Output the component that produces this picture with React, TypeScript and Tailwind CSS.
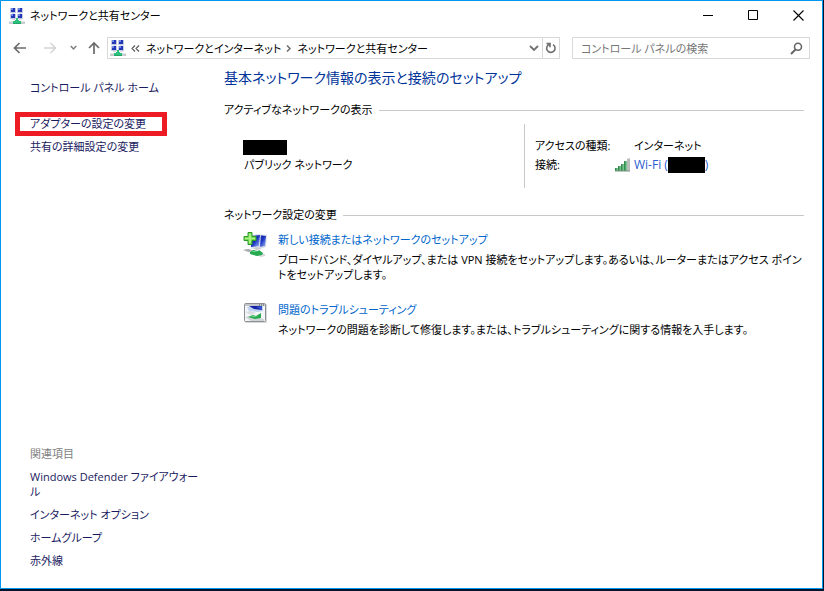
import type { ReactNode } from 'react';

const RELATED_LINKS = ['Windows Defender ファイアウォール', 'インターネット オプション', 'ホームグループ', '赤外線'];

function NetworkIcon({ className = '' }: { className?: string }) {
    return (
        <svg className={className} width="16" height="16" viewBox="0 0 16 16" shapeRendering="crispEdges" aria-hidden="true">
            {[[2, 0], [9, 0], [2, 6], [9, 6]].map(([x, y]) => (
                <g key={`${x}-${y}`}>
                    <rect x={x - 1} y={y} width="6" height="5" fill="#c3cbe0" />
                    <rect x={x} y={y} width="4" height="4" fill="#2437b8" />
                    <rect x={x} y={y} width="2" height="2" fill="#6f86e0" />
                    <rect x={x + 1} y={y + 5} width="3" height="1" fill="#dde0e6" />
                </g>
            ))}
            <rect y="13" width="16" height="3" fill="#c9cdd0" />
            <rect y="13" width="16" height="1" fill="#e3e6e8" />
            <path d="M7 10h2v2h1v1h2v3H4v-3h2v-1h1z" fill="#2fbf7c" />
            <rect x="4" y="15" width="8" height="1" fill="#24a568" />
        </svg>
    );
}

function SignalIcon() {
    return (
        <svg width="16" height="14" viewBox="0 0 16 14" aria-hidden="true">
            <defs>
                <linearGradient id="signal" x1="0" y1="0" x2="1" y2="0">
                    <stop offset="0" stopColor="#1f8040" />
                    <stop offset="1" stopColor="#8fcf9f" />
                </linearGradient>
            </defs>
            <path d="M0 10h3v3H0z" fill="url(#signal)" />
            <path d="M3 8h3v5H3z" fill="url(#signal)" />
            <path d="M6 6h3v7H6z" fill="url(#signal)" />
            <path d="M9 3h3v10H9z" fill="url(#signal)" />
            <path d="M12 1l3-1v13h-3z" fill="#b9bdb9" />
            <path d="M0 13h15" stroke="#78917f" strokeWidth="1" />
        </svg>
    );
}

function NewConnectionIcon() {
    return (
        <svg width="26" height="26" viewBox="0 0 26 26" aria-hidden="true">
            <defs>
                <linearGradient id="screen" x1="0" y1="0" x2="1" y2="1">
                    <stop offset="0" stopColor="#0b1682" />
                    <stop offset="0.5" stopColor="#1d36c6" />
                    <stop offset="1" stopColor="#a8c4f8" />
                </linearGradient>
            </defs>
            <path d="M13 2l11 1-1 12-7 2z" fill="#d7dce6" />
            <path d="M15 3l8 1-1 10-6 1z" fill="url(#screen)" />
            <path d="M7 3l11-1-1 13-9 2z" fill="#dfe4ee" />
            <path d="M8 4l9-1-1 11-8 1z" fill="url(#screen)" />
            <path d="M10 16l5-1 4 2-6 1z" fill="#c6cbd2" />
            <path d="M0 18l5-1 17 5v2l-4 1z" fill="#d6d8da" />
            <path d="M0 18l5-1 4 1-3 2z" fill="#a9acaf" />
            <path d="M7 20l3-2 5 1 1-1 4 3-1 2-5 1-7-2z" fill="#27ab52" />
            <path d="M8 20l3-1 4 1z" fill="#6fda8e" />
            <path d="M5 .5h4v4h4v4H9v4H5v-4H1v-4h4z" fill="#7ede5a" stroke="#2b9a24" />
            <path d="M6 2h2v4h4v1H8v4H6V7H2V6h4z" fill="#a9f285" />
        </svg>
    );
}

function TroubleshootIcon() {
    return (
        <svg width="26" height="22" viewBox="0 0 26 22" aria-hidden="true">
            <path d="M2 2h22v19H2z" fill="#d9d9d9" />
            <rect x="1.5" y="1.5" width="21" height="18" rx="1" fill="#f5f6f7" stroke="#8b8f93" />
            <path d="M2 2h20v2H2z" fill="#c2c6ca" />
            <path d="M16 3h1M18 3h1M20 3h1" stroke="#4d5358" />
            <path d="M4 5l16-1v5l-5 1-9-1z" fill="#bfd0f2" />
            <path d="M6 4h13v4l-8-1z" fill="#1523a4" />
            <path d="M13 5l6-1v4z" fill="#3654d2" />
            <path d="M2 10l5-1 6 2-5 2z" fill="#dadde0" />
            <path d="M2 15l6-1 13 3v2H8z" fill="#d0d4d7" />
            <path d="M5 15l5-2 3 1 5-3v5l-6 1z" fill="#27a94f" />
            <path d="M7 15l4-1 4 1z" fill="#77db93" />
        </svg>
    );
}

function SectionTitle({ children }: { children: ReactNode }) {
    return (
        <div className="flex items-center gap-1.5">
            <h2 className="leading-5">{children}</h2>
            <div className="h-px flex-1 bg-[#c8c8c8]" />
        </div>
    );
}

interface TaskProps {
    icon: ReactNode;
    title: string;
    children: ReactNode;
}

function Task({ icon, title, children }: TaskProps) {
    return (
        <li className="flex gap-[9px] pl-[19px]">
            <div className="shrink-0">{icon}</div>
            <div className="min-w-0 flex-1">
                <a href="#" className="block text-[#0066cc]">{title}</a>
                <p className="mt-[5px]">{children}</p>
            </div>
        </li>
    );
}

export default function App() {
    return (
        <div className="min-h-screen flex flex-col bg-[#03142f] pr-px pb-0.5 font-['Open_Sans','Noto_Sans_CJK_JP',sans-serif] text-[11px] leading-[15px] text-black [font-feature-settings:'palt']">
            <div className="flex flex-1 flex-col border border-[#0097f0] bg-white">
                {/* Title bar */}
                <header className="flex h-[29px] items-center pr-px pl-2">
                    <NetworkIcon />
                    <h1 className="ml-[5px] flex-1">ネットワークと共有センター</h1>
                    <button type="button" aria-label="最小化" className="flex h-full w-[45px] items-center justify-center">
                        <svg width="11" height="11" viewBox="0 0 11 11"><path d="M0 5.5h10" stroke="#000" /></svg>
                    </button>
                    <button type="button" aria-label="最大化" className="flex h-full w-[45px] items-center justify-center">
                        <svg width="11" height="11" viewBox="0 0 11 11"><path d="M.5.5h9v9h-9z" fill="none" stroke="#000" /></svg>
                    </button>
                    <button type="button" aria-label="閉じる" className="flex h-full w-[45px] items-center justify-center">
                        <svg width="11" height="11" viewBox="0 0 11 11"><path d="M.5.5l10 10M10.5.5l-10 10" stroke="#000" strokeWidth="1.1" /></svg>
                    </button>
                </header>

                {/* Navigation bar */}
                <nav className="mt-[7px] flex h-[22px] items-center pr-3">
                    <div className="flex w-[106px] shrink-0 items-center pl-3">
                        <button type="button" aria-label="戻る">
                            <svg width="14" height="12" viewBox="0 0 14 12" fill="none" stroke="#6b6b6b" strokeWidth="1.7"><path d="M13 6H2M6.5 1L1.5 6l5 5" /></svg>
                        </button>
                        <button type="button" aria-label="進む" className="ml-4">
                            <svg width="14" height="12" viewBox="0 0 14 12" fill="none" stroke="#d4d4d4" strokeWidth="1.5"><path d="M1 6h11M7.5 1l5 5-5 5" /></svg>
                        </button>
                        <button type="button" aria-label="最近表示した場所" className="ml-[13px]">
                            <svg width="7" height="6" viewBox="0 0 7 6" fill="none" stroke="#7d7d7d" strokeWidth="1.5"><path d="M.8 1l2.7 3 2.7-3" /></svg>
                        </button>
                        <button type="button" aria-label="上へ" className="ml-[11px]">
                            <svg width="12" height="14" viewBox="0 0 12 14" fill="none" stroke="#6b6b6b" strokeWidth="1.7"><path d="M6 13V2M1 7l5-5 5 5" /></svg>
                        </button>
                    </div>
                    <div className="flex h-full flex-1 items-center border border-[#d9d9d9] pl-0.5">
                        <NetworkIcon className="shrink-0" />
                        <svg className="ml-[5px] shrink-0" width="9" height="7" viewBox="0 0 9 7" fill="none" stroke="#555" strokeWidth="1.1"><path d="M4 .5l-3 3 3 3M8 .5l-3 3 3 3" /></svg>
                        <button type="button" className="ml-[6px]">ネットワークとインターネット</button>
                        <svg className="ml-[5px] shrink-0" width="5" height="7" viewBox="0 0 5 7" fill="none" stroke="#666" strokeWidth="1.4"><path d="M1 .5l3 3-3 3" /></svg>
                        <button type="button" className="ml-[6px] flex-1 text-left">ネットワークと共有センター</button>
                        <button type="button" aria-label="以前の場所" className="flex h-full w-4 items-center justify-center">
                            <svg width="10" height="7" viewBox="0 0 10 7" fill="none" stroke="#707070" strokeWidth="1.8"><path d="M1 1l4 4 4-4" /></svg>
                        </button>
                        <button type="button" aria-label="最新の情報に更新" className="flex h-full w-[17px] items-center justify-center border-l border-[#d9d9d9]">
                            <svg width="12" height="12" viewBox="0 0 12 12" fill="none" stroke="#6f6f6f" strokeWidth="1.6"><path d="M1.5 1.5H5v3.7M4.6 2.2A4.2 4.2 0 1 0 8 2.6" /></svg>
                        </button>
                    </div>
                    <label className="ml-3 flex h-full w-[238px] items-center border border-[#d9d9d9] pr-1.5 pl-2">
                        <input type="text" aria-label="コントロール パネルの検索" placeholder="コントロール パネルの検索" className="min-w-0 flex-1 outline-none placeholder:text-[#767676]" />
                        <svg width="13" height="13" viewBox="0 0 13 13" fill="none" stroke="#666" strokeWidth="1.6"><circle cx="8" cy="4.8" r="3.5" /><path d="M5.5 7.5L1 12" strokeWidth="2" /></svg>
                    </label>
                </nav>

                <div className="mt-px flex flex-1">
                    {/* Left pane */}
                    <aside className="flex w-[223px] shrink-0 flex-col items-start pt-5 pr-4 pb-5 pl-[29px] text-[#1a1a5e]">
                        <a href="#">コントロール パネル ホーム</a>
                        <a href="#" className="-ml-[15px] mt-[17px] w-[152px] border-[5px] border-[#ed1c24] pl-2.5 leading-[14px]">アダプターの設定の変更</a>
                        <a href="#" className="mt-[3px]">共有の詳細設定の変更</a>
                        <h2 className="mt-auto text-[#808080]">関連項目</h2>
                        <ul className="mt-2 flex w-[172px] flex-col gap-2">
                            {RELATED_LINKS.map(label => (
                                <li key={label}><a href="#">{label}</a></li>
                            ))}
                        </ul>
                    </aside>

                    <main className="min-w-0 flex-1 pt-1.5 pr-[18px]">
                        <h1 className="text-[14px] leading-6 text-[#003399]">基本ネットワーク情報の表示と接続のセットアップ</h1>

                        <section className="mt-2.5">
                            <SectionTitle>アクティブなネットワークの表示</SectionTitle>
                            <div className="mt-1 grid min-h-16 grid-cols-[300fr_280fr]">
                                <div className="pt-4 pl-[19px]">
                                    <div className="h-[15px] w-11 bg-black" />
                                    <p className="mt-0.5 pl-px">パブリック ネットワーク</p>
                                </div>
                                <dl className="grid grid-cols-[80px_1fr] content-start border-l border-[#c8c8c8] pt-3 pl-2.5 leading-[19px]">
                                    <dt>アクセスの種類:</dt>
                                    <dd className="pl-[19px]">インターネット</dd>
                                    <dt>接続:</dt>
                                    <dd className="flex items-center gap-[3px]">
                                        <SignalIcon />
                                        <a href="#" className="flex items-center text-[12px] text-[#2a5bd0]">
                                            <span>Wi-Fi (</span>
                                            <span className="h-4 w-[37px] bg-black" />
                                            <span>)</span>
                                        </a>
                                    </dd>
                                </dl>
                            </div>
                        </section>

                        <section className="mt-[17px]">
                            <SectionTitle>ネットワーク設定の変更</SectionTitle>
                            <ul className="mt-[7px] flex flex-col gap-5">
                                <Task icon={<NewConnectionIcon />} title="新しい接続またはネットワークのセットアップ">
                                    ブロードバンド、ダイヤルアップ、または VPN 接続をセットアップします。あるいは、ルーターまたはアクセス ポイントをセットアップします。
                                </Task>
                                <Task icon={<TroubleshootIcon />} title="問題のトラブルシューティング">
                                    ネットワークの問題を診断して修復します。または、トラブルシューティングに関する情報を入手します。
                                </Task>
                            </ul>
                        </section>
                    </main>
                </div>
            </div>
        </div>
    );
}
